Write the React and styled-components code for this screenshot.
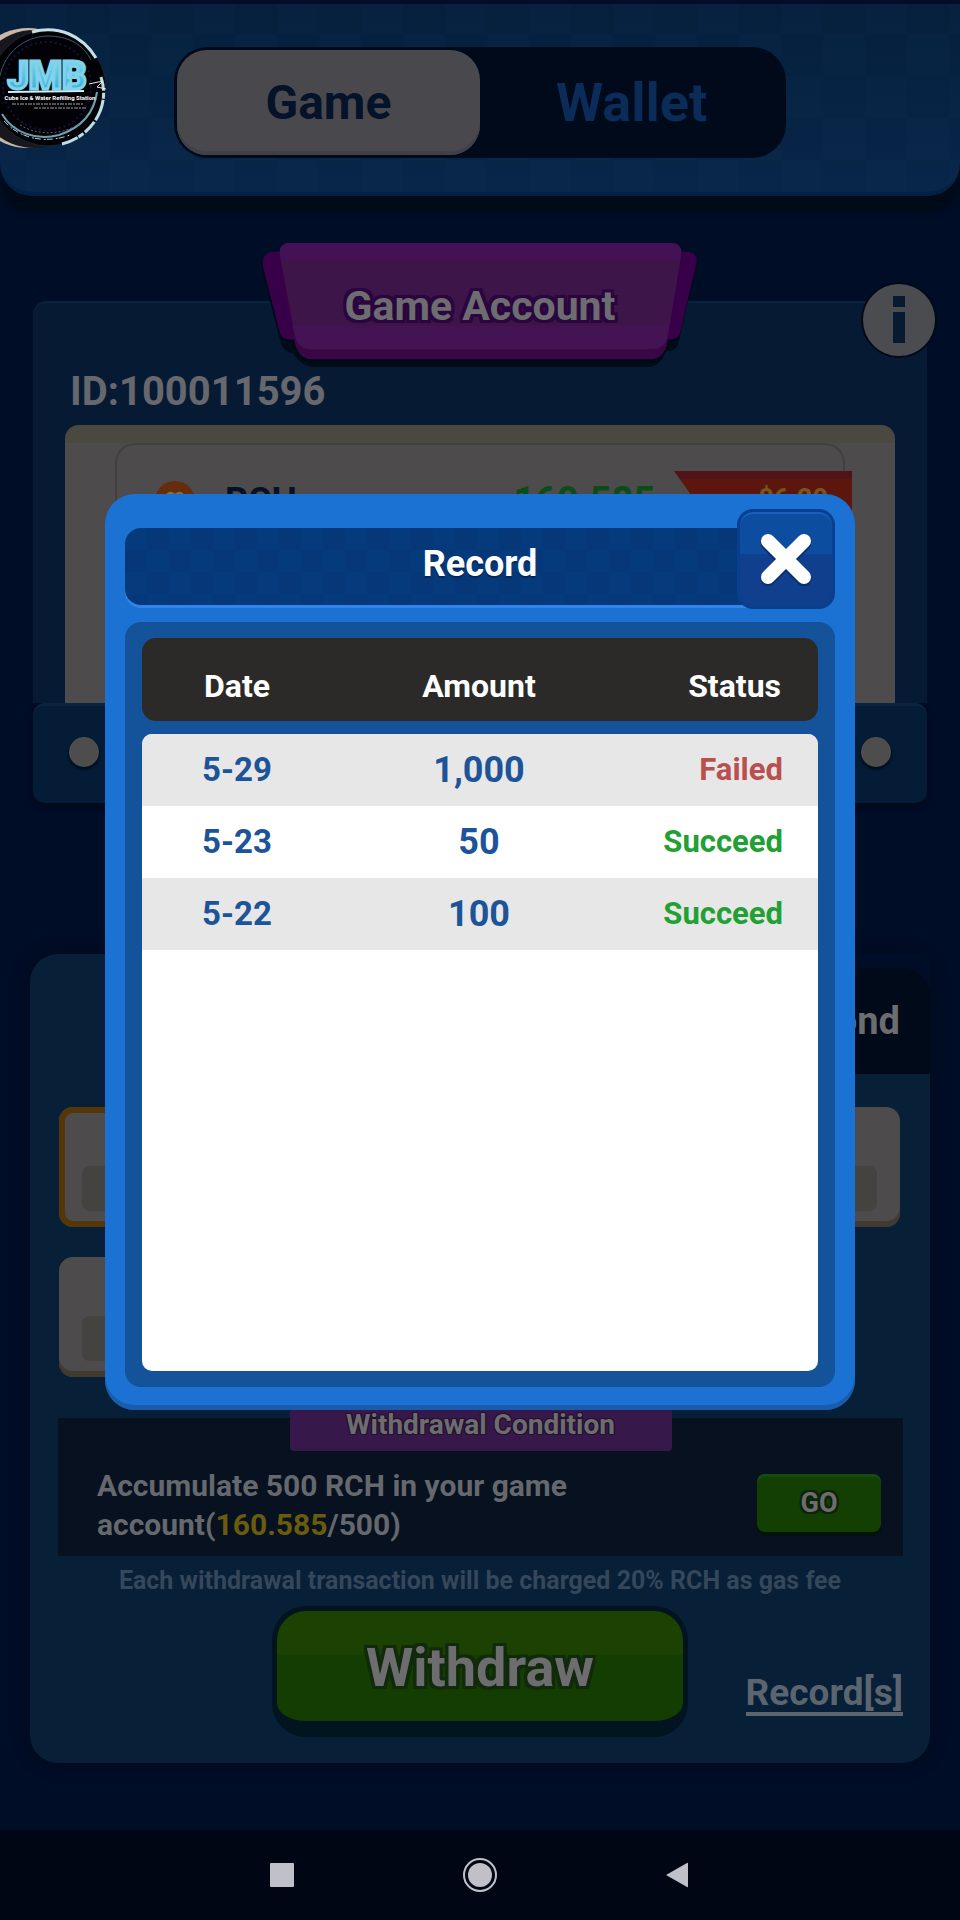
import React from 'react';
import styled, { createGlobalStyle } from 'styled-components';

const COLORS = {
  night: '#000d26',
  panel: '#061b33',
  lowerPanel: '#081f38',
  muted: '#6d6d70',
  card: '#4d4b4b',
  blue: '#1b72d2',
  deepBlue: '#14529a',
  link: '#1d5398',
  success: '#22a033',
  danger: '#b9504f',
};

const RECORDS = [
  { date: '5-29', amount: '1,000', status: 'Failed' },
  { date: '5-23', amount: '50', status: 'Succeed' },
  { date: '5-22', amount: '100', status: 'Succeed' },
];

const OPTIONS = [1, 2, 3, 4];

const outline = (color, size) =>
  [
    [-1, -1],
    [0, -1],
    [1, -1],
    [-1, 0],
    [1, 0],
    [-1, 1],
    [0, 1],
    [1, 1],
  ]
    .map(([x, y]) => `${x * size}px ${y * size}px 0 ${color}`)
    .join(', ');

const Logo = () => (
  <LogoImage viewBox="0 0 110 124" role="img" aria-label="JMB">
    <circle cx="28" cy="61" r="60" fill="#c9b7a8" />
    <circle cx="34" cy="62" r="59" fill="#17171d" />
    <circle cx="48" cy="61" r="58" fill="#020206" stroke="#132a3c" />
    <path d="M32 5C58-2 82 8 96 31" fill="none" stroke="#c4dfe5" strokeWidth="3" />
    <path d="M101 50C111 80 91 110 62 117" fill="none" stroke="#bddde5" strokeWidth="3" strokeDasharray="14 2 6 1 22 2" />
    <path d="M2 87C13 106 37 114 59 108C80 101 94 87 97 65" fill="none" stroke="#6fa1b2" strokeWidth="2" />
    <path d="M0 49C5 25 24 10 47 9C68 9 83 17 91 33" fill="none" stroke="#38596c" strokeWidth="1" />
    <path d="M4 94C20 112 46 117 70 108" fill="none" stroke="#a8ced8" strokeWidth="1" strokeDasharray="6 3 2 1" />
    <circle cx="47" cy="59" r="44" fill="none" stroke="#151044" strokeWidth="2" strokeDasharray="2 3" />
    <path d="M89 57L103 54L97 60L106 62" fill="none" stroke="#e4eef0" strokeWidth="1" />
    <defs>
      <linearGradient id="ice" x1="0" x2="0" y1="0" y2="1">
        <stop offset="0" stopColor="#8fdcf0" />
        <stop offset="1" stopColor="#2ba5d3" />
      </linearGradient>
    </defs>
    <text x="47" y="62" textAnchor="middle" fontSize="38" fontWeight="900" fill="url(#ice)" stroke="#7fd3ea" strokeWidth="3">
      JMB
    </text>
    <path d="M8 65L84 64" stroke="#cfeff6" strokeWidth="2" />
    <text x="50" y="73" textAnchor="middle" fontSize="6" fontWeight="700" fill="#fff">
      Cube Ice &amp; Water Refilling Station
    </text>
    <path d="M12 77H84M34 81H86" stroke="#a4a4a8" strokeWidth="1" strokeDasharray="4 1 2 1" />
    <path d="M20 98C38 109 62 108 79 97" fill="none" stroke="#656574" strokeDasharray="2 2" />
  </LogoImage>
);

const BannerShape = () => (
  <BannerImage viewBox="0 0 436 128" preserveAspectRatio="none" aria-hidden="true">
    <path d="M10 12H426Q436 13 433 28L416 103Q413 110 404 110Q398 126 386 126H52Q40 126 31 112Q22 111 19 102L0 28Q-2 13 10 12Z" fill="#000b18" />
    <path d="M10 9H426Q437 10 434 22L418 92Q416 98 408 98H28Q20 98 18 92L1 24Q-1 11 10 9Z" fill="#380048" />
    <path d="M28 0H408Q421 0 419 13L405 102Q402 118 388 118H50Q37 118 33 102L18 13Q16 0 28 0Z" fill="#3a0745" />
    <path d="M28 0H408Q421 0 419 13L406 94Q403 108 388 108H50Q37 108 33 94L18 13Q16 0 28 0Z" fill="#3e1548" />
    <path d="M28 0H408Q421 0 419 13L418 17H19L18 13Q16 0 28 0Z" fill="#431154" />
    <path d="M30 84H407L405 97Q402 108 388 108H50Q37 108 34 97Z" fill="#441354" />
  </BannerImage>
);

const App = () => (
  <Page>
    <GlobalStyle />
    <Header>
      <Logo />
      <Switcher>
        <SwitchButton type="button" active>
          Game
        </SwitchButton>
        <SwitchButton type="button">Wallet</SwitchButton>
      </Switcher>
    </Header>

    <AccountPanel>
      <Banner>
        <BannerShape />
        <BannerText>Game Account</BannerText>
      </Banner>
      <InfoButton type="button" aria-label="Information">
        <svg width="14" height="50" viewBox="0 0 14 50" aria-hidden="true">
          <path d="M1 1H13V12H1ZM1 17H13V48H1Z" fill="#071a30" />
        </svg>
      </InfoButton>
      <AccountId>ID:100011596</AccountId>
      <TokenList>
        <TokenRow>
          <Coin viewBox="0 0 40 40" aria-hidden="true">
            <circle cx="20" cy="20" r="20" fill="#652d0b" />
            <path d="M11 28V17Q15 9 20 16Q25 9 29 17V28" fill="none" stroke="#7b704f" strokeWidth="4" />
          </Coin>
          <TokenName>RCH</TokenName>
          <TokenAmount>160.585</TokenAmount>
          <Ribbon>$6.20</Ribbon>
        </TokenRow>
      </TokenList>
    </AccountPanel>
    <Bolts>
      <Bolt />
      <Bolt />
    </Bolts>

    <WithdrawPanel>
      <Tabs>
        <Tab type="button">Diamond</Tab>
      </Tabs>
      <Options>
        {OPTIONS.map((option, index) => (
          <Option key={option} selected={index === 0}>
            <OptionValue />
          </Option>
        ))}
      </Options>
      <Condition>
        <ConditionTitle>Withdrawal Condition</ConditionTitle>
        <ConditionText>
          Accumulate 500 RCH in your game account(<Highlight>160.585</Highlight>/500)
        </ConditionText>
        <GoButton type="button">GO</GoButton>
      </Condition>
      <FeeNote>Each withdrawal transaction will be charged 20% RCH as gas fee</FeeNote>
      <Actions>
        <WithdrawButton type="button">Withdraw</WithdrawButton>
        <RecordLink href="#records">Record[s]</RecordLink>
      </Actions>
    </WithdrawPanel>

    <NavBar>
      <NavButton type="button" aria-label="Recent apps">
        <svg width="36" height="36" viewBox="0 0 36 36">
          <rect x="6" y="6" width="24" height="24" rx="1" fill="#bfc0c8" />
        </svg>
      </NavButton>
      <NavButton type="button" aria-label="Home">
        <svg width="36" height="36" viewBox="0 0 36 36">
          <circle cx="18" cy="18" r="16" fill="none" stroke="#bfc0c8" strokeWidth="2" />
          <circle cx="18" cy="18" r="12" fill="#bfc0c8" />
        </svg>
      </NavButton>
      <NavButton type="button" aria-label="Back">
        <svg width="36" height="36" viewBox="0 0 36 36">
          <path d="M6 18L27 6Q28 5 28 7V29Q28 31 27 30Z" fill="#bfc0c8" />
        </svg>
      </NavButton>
    </NavBar>

    <Overlay>
      <Modal role="dialog" aria-labelledby="record-title">
        <TitleBar>
          <Title id="record-title">Record</Title>
        </TitleBar>
        <CloseButton type="button" aria-label="Close">
          <svg width="54" height="54" viewBox="0 0 54 54" aria-hidden="true">
            <path d="M9 11L45 47M45 11L9 47" stroke="#0a2f70" strokeWidth="15" strokeLinecap="round" />
            <path d="M9 9L45 45M45 9L9 45" stroke="#fff" strokeWidth="14" strokeLinecap="round" />
          </svg>
        </CloseButton>
        <TableFrame>
          <Table>
            <TableHead>
              <TableRow>
                <HeadCell>Date</HeadCell>
                <HeadCell>Amount</HeadCell>
                <HeadCell align="right">Status</HeadCell>
              </TableRow>
            </TableHead>
            <TableBody>
              {RECORDS.map(({ date, amount, status }) => (
                <TableRow key={date}>
                  <Cell>{date}</Cell>
                  <AmountCell>{amount}</AmountCell>
                  <StatusCell status={status}>{status}</StatusCell>
                </TableRow>
              ))}
            </TableBody>
          </Table>
        </TableFrame>
      </Modal>
    </Overlay>
  </Page>
);

const GlobalStyle = createGlobalStyle`
  *, *::before, *::after {
    box-sizing: border-box;
  }

  body {
    margin: 0;
    background: ${COLORS.night};
    font-family: Roboto, 'Liberation Sans', sans-serif;
    font-weight: 700;
  }

  button {
    border: none;
    padding: 0;
    font: inherit;
    cursor: pointer;
  }

  h1, h2, p {
    margin: 0;
    font: inherit;
  }
`;

const Page = styled.div`
  position: relative;
  display: flex;
  flex-direction: column;
  min-height: 100vh;
  background: ${COLORS.night};
`;

const Header = styled.header`
  position: relative;
  display: flex;
  justify-content: center;
  padding: 43px 16px 34px;
  border-top: 4px solid #040c27;
  border-bottom: 4px solid #032146;
  border-radius: 0 0 32px 32px;
  background:
    repeating-conic-gradient(rgba(40, 70, 130, 0.04) 0 25%, transparent 0 50%) 25px 30px / 84px 84px,
    linear-gradient(#05203c, #08264a);
  box-shadow: 0 16px 6px #000b18;
`;

const LogoImage = styled.svg`
  position: absolute;
  left: 0;
  top: 23px;
  width: 110px;
  height: 124px;
`;

const Switcher = styled.div`
  display: flex;
  width: 66%;
  min-width: 320px;
  padding: 3px;
  border-radius: 34px;
  background: #000a1b;
`;

const SwitchButton = styled.button`
  flex: 1;
  height: 105px;
  border-radius: 30px;
  background: ${props => props.active ? '#49494d' : 'transparent'};
  color: ${props => props.active ? '#04122a' : '#0b2c59'};
  box-shadow: ${props => props.active ? 'inset 0 -4px 0 #404148' : 'none'};
  font-size: ${props => props.active ? '48px' : '54px'};
`;

const AccountPanel = styled.section`
  position: relative;
  margin: 105px 33px 0;
  padding: 68px 32px 0;
  border-top: 2px solid #08233f;
  border-radius: 14px 14px 0 0;
  background: ${COLORS.panel};
`;

const Banner = styled.div`
  position: absolute;
  top: -60px;
  left: 50%;
  display: grid;
  place-items: center;
  width: 436px;
  height: 126px;
  transform: translateX(-50%);
`;

const BannerImage = styled.svg`
  position: absolute;
  inset: 0;
  width: 100%;
  height: 100%;
`;

const BannerText = styled.h1`
  position: relative;
  color: ${COLORS.muted};
  font-size: 41px;
  line-height: 48px;
  text-shadow: ${outline('#2b0540', 3)};
`;

const InfoButton = styled.button`
  position: absolute;
  top: -21px;
  right: -10px;
  display: grid;
  place-items: center;
  width: 76px;
  height: 76px;
  border: 2px solid #000a1b;
  border-radius: 50%;
  background: #4b4c50;
`;

const AccountId = styled.p`
  padding-left: 5px;
  color: #66686d;
  font-size: 40px;
  line-height: 42px;
`;

const TokenList = styled.div`
  height: 278px;
  margin-top: 12px;
  padding: 18px 50px 0;
  border-radius: 14px 14px 0 0;
  background: linear-gradient(#4b4841 0 18px, ${COLORS.card} 18px);
`;

const TokenRow = styled.div`
  position: relative;
  display: flex;
  align-items: center;
  height: 110px;
  padding: 4px 188px 0 38px;
  border: 2px solid #424141;
  border-bottom: none;
  border-radius: 20px;
`;

const Coin = styled.svg`
  width: 40px;
  height: 40px;
`;

const TokenName = styled.span`
  margin-left: 30px;
  color: #061127;
  font-size: 36px;
`;

const TokenAmount = styled.span`
  margin-left: auto;
  color: #0a4d17;
  font-size: 38px;
`;

const Ribbon = styled.span`
  position: absolute;
  top: 26px;
  right: -9px;
  width: 178px;
  height: 60px;
  padding: 12px 24px 0 0;
  background: linear-gradient(#4f1318 0 8px, #5c160d 8px);
  clip-path: polygon(0 0, 100% 0, 100% 100%, 24% 100%);
  color: #76561b;
  font-size: 27px;
  line-height: 32px;
  text-align: right;
`;

const Bolts = styled.div`
  display: flex;
  justify-content: space-between;
  align-items: center;
  height: 100px;
  margin: 0 33px;
  padding: 0 36px 6px;
  border-top: 3px solid #0a2442;
  border-radius: 12px;
  background: #041c35;
  box-shadow: 0 4px 6px #000b1b;
`;

const Bolt = styled.span`
  width: 30px;
  height: 30px;
  border-radius: 50%;
  background: #4e4d4e;
  box-shadow: 0 2px 2px 1px #00101f;
`;

const WithdrawPanel = styled.section`
  margin: 151px 30px 66px;
  padding-bottom: 26px;
  border-radius: 28px;
  background: ${COLORS.lowerPanel};
  box-shadow: 0 0 16px #000b1b;
`;

const Tabs = styled.div`
  display: flex;
  justify-content: flex-end;
  align-items: flex-end;
  height: 120px;
  background: linear-gradient(${COLORS.night}, ${COLORS.night}) right top / 50% 100% no-repeat;
  border-radius: 28px 0 0 0;
`;

const Tab = styled.button`
  width: 50%;
  height: 106px;
  padding: 0 30px 0 0;
  border-radius: 0 28px 0 0;
  background: #000a19;
  color: ${COLORS.muted};
  font-size: 38px;
  text-align: right;
`;

const Options = styled.div`
  display: grid;
  grid-template-columns: repeat(3, 1fr);
  gap: 30px 20px;
  padding: 33px 30px 0 29px;
`;

const Option = styled.div`
  display: flex;
  align-items: flex-end;
  height: 120px;
  padding: 0 23px 16px;
  border-radius: 14px;
  background: ${COLORS.card};
  box-shadow: ${props => props.selected ? 'inset 0 0 0 6px #553608' : 'inset 0 -6px 0 #413a30'};
`;

const OptionValue = styled.span`
  flex: 1;
  height: 45px;
  border-radius: 8px;
  background: #444340;
`;

const Condition = styled.div`
  position: relative;
  display: flex;
  justify-content: space-between;
  align-items: flex-end;
  margin: 41px 27px 0 28px;
  padding: 48px 22px 12px 39px;
  background: #07111f;
`;

const ConditionTitle = styled.h2`
  position: absolute;
  top: -14px;
  left: 50%;
  width: 382px;
  padding-bottom: 5px;
  border-radius: 4px;
  background: #37184a;
  color: ${COLORS.muted};
  font-size: 28px;
  line-height: 42px;
  text-align: center;
  text-shadow: ${outline('#24112f', 1)};
  transform: translateX(-50%);
`;

const ConditionText = styled.p`
  max-width: 500px;
  color: #65686c;
  font-size: 30px;
  line-height: 39px;
`;

const Highlight = styled.span`
  color: #6a5b0d;
`;

const GoButton = styled.button`
  width: 124px;
  height: 58px;
  margin-bottom: 12px;
  border-radius: 8px;
  background: #133f02;
  box-shadow: inset 0 3px 0 #164a10, 0 4px 0 #02130d;
  color: ${COLORS.muted};
  font-size: 27px;
  text-shadow: ${outline('#0c2407', 2)};
`;

const FeeNote = styled.p`
  margin-top: 10px;
  color: #34475b;
  font-size: 25px;
  line-height: 30px;
  text-align: center;
`;

const Actions = styled.div`
  display: grid;
  grid-template-columns: 1fr auto 1fr;
  align-items: center;
  margin-top: 10px;
  padding: 0 27px;
`;

const WithdrawButton = styled.button`
  grid-column: 2;
  width: 416px;
  height: 131px;
  padding-top: 3px;
  border: solid #021420;
  border-width: 5px 5px 16px;
  border-radius: 34px;
  background: linear-gradient(#1c4203 0 40%, #143d01 40%);
  color: ${COLORS.muted};
  font-size: 54px;
  text-shadow: ${outline('#112a0c', 3)};
`;

const RecordLink = styled.a`
  justify-self: end;
  margin-top: 46px;
  border-bottom: 4px solid #5a6570;
  color: #5a6570;
  font-size: 37px;
  line-height: 38px;
  text-decoration: none;
`;

const NavBar = styled.nav`
  display: flex;
  justify-content: center;
  align-items: center;
  gap: 162px;
  height: 90px;
  margin-top: auto;
  background: #000614;
`;

const NavButton = styled.button`
  display: grid;
  place-items: center;
  width: 36px;
  height: 36px;
  background: transparent;
`;

const Overlay = styled.div`
  position: absolute;
  inset: 0;
  display: flex;
  justify-content: center;
  align-items: center;
  padding: 0 105px 16px;
`;

const Modal = styled.section`
  position: relative;
  flex: 1;
  padding: 34px 20px 23px;
  border-radius: 30px;
  background: ${COLORS.blue};
  box-shadow: inset 0 -5px 0 #1a5cab;
`;

const TitleBar = styled.div`
  display: flex;
  justify-content: center;
  padding: 12px 16px 17px;
  border-radius: 16px;
  background:
    repeating-conic-gradient(rgba(0, 30, 80, 0.08) 0 25%, transparent 0 50%) 0 0 / 44px 44px,
    #053a7d;
  box-shadow: 0 3px 0 #3185ea;
`;

const Title = styled.h2`
  color: #fff;
  font-size: 36px;
  line-height: 48px;
  text-shadow: 0 2px 0 #04265a;
`;

const CloseButton = styled.button`
  position: absolute;
  top: 15px;
  right: 20px;
  display: grid;
  place-items: center;
  width: 98px;
  height: 100px;
  border: 3px solid #093f8e;
  border-radius: 16px;
  background: linear-gradient(#0d4da0 0 45%, #103f8d 45%);
  box-shadow: inset 0 2px 0 #1860bb;
`;

const TableFrame = styled.div`
  margin-top: 17px;
  padding: 16px 17px;
  border-radius: 16px;
  background: ${COLORS.deepBlue};
`;

const Table = styled.table`
  display: flex;
  flex-direction: column;
  gap: 13px;
`;

const TableRow = styled.tr`
  display: grid;
  grid-template-columns: 190px 1fr 192px;
  align-items: center;
`;

const TableHead = styled.thead`
  display: block;
  padding: 24px 0 11px;
  border-radius: 14px;
  background: #2b2a29;
`;

const TableBody = styled.tbody`
  display: block;
  min-height: 637px;
  border-radius: 10px;
  background: #fff;
  overflow: hidden;

  ${TableRow} {
    height: 72px;
  }

  ${TableRow}:nth-child(odd) {
    background: #e7e7e7;
  }
`;

const HeadCell = styled.th`
  padding: 0 ${props => props.align === 'right' ? '37px' : '0'} 0 0;
  color: #fff;
  font-size: 32px;
  line-height: 48px;
  text-align: ${props => props.align || 'center'};
`;

const Cell = styled.td`
  padding: 0;
  color: ${COLORS.link};
  font-size: 33px;
  line-height: 48px;
  text-align: center;
`;

const AmountCell = styled(Cell)`
  font-size: 36px;
`;

const StatusCell = styled(Cell)`
  padding-right: 35px;
  color: ${props => props.status === 'Failed' ? COLORS.danger : COLORS.success};
  font-size: 31px;
  text-align: right;
`;

export default App;
